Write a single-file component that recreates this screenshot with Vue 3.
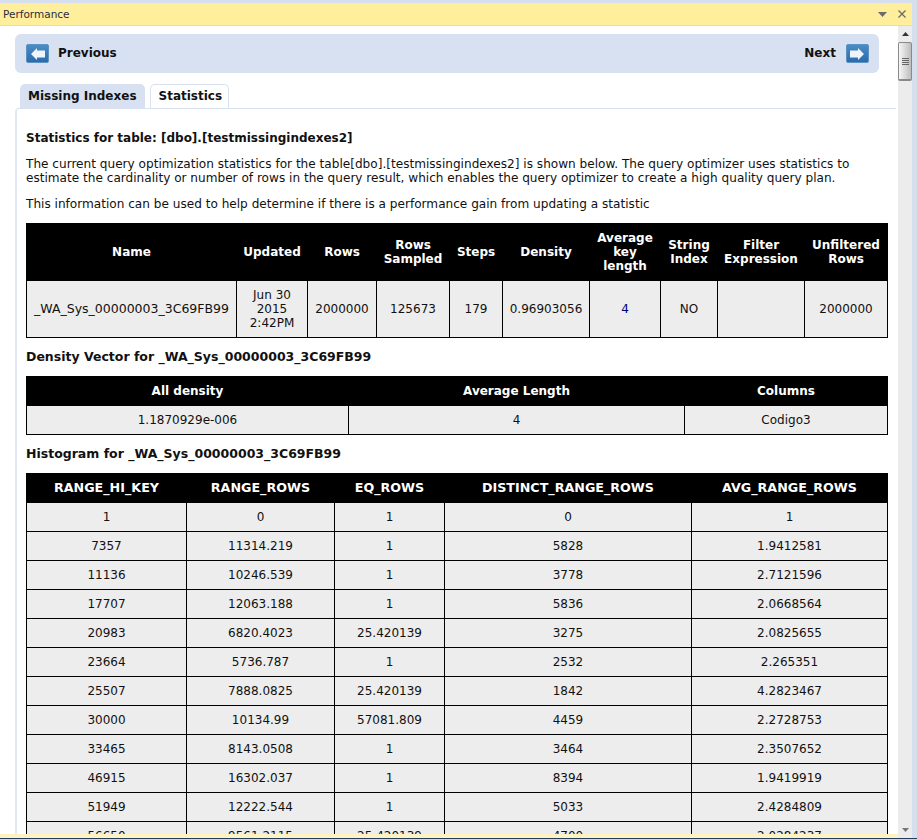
<script setup>
const hist = [
  ['1','0','1','0','1'],
  ['7357','11314.219','1','5828','1.9412581'],
  ['11136','10246.539','1','3778','2.7121596'],
  ['17707','12063.188','1','5836','2.0668564'],
  ['20983','6820.4023','25.420139','3275','2.0825655'],
  ['23664','5736.787','1','2532','2.265351'],
  ['25507','7888.0825','25.420139','1842','4.2823467'],
  ['30000','10134.99','57081.809','4459','2.2728753'],
  ['33465','8143.0508','1','3464','2.3507652'],
  ['46915','16302.037','1','8394','1.9419919'],
  ['51949','12222.544','1','5033','2.4284809'],
  ['56650','9561.2115','25.420139','4700','2.0284237'],
]
const histHead = ['RANGE_HI_KEY','RANGE_ROWS','EQ_ROWS','DISTINCT_RANGE_ROWS','AVG_RANGE_ROWS']
const statHead = ['Name','Updated','Rows','Rows Sampled','Steps','Density','Average key length','String Index','Filter Expression','Unfiltered Rows']
const statRow = ['_WA_Sys_00000003_3C69FB99','Jun 30 2015 2:42PM','2000000','125673','179','0.96903056','4','NO','','2000000']
const statCols = [210,71,69,73,53,87,71,57,87,83]
const densCols = [322,336,203]
const histCols = [160,148,110,247,196]
</script>

<template>
  <div class="window">
    <div class="titlebar">
      <span class="title">Performance</span>
      <span class="controls">
        <svg width="9" height="5" viewBox="0 0 9 5"><path d="M0 0h9L4.5 5z" fill="#6b6b6b"/></svg>
        <svg width="8" height="8" viewBox="0 0 8 8"><path d="M.5.5l7 7M7.5.5l-7 7" stroke="#6b6b6b" stroke-width="1.3" fill="none"/></svg>
      </span>
    </div>
    <div class="body">
      <div class="main">
        <div class="content">
          <div class="nav">
            <div class="nav-item">
              <svg class="arrow" width="23" height="19" viewBox="0 0 23 19">
                <defs>
                  <linearGradient id="ag" x1="0" y1="0" x2="0" y2="1">
                    <stop offset="0" stop-color="#4a8ec8"/><stop offset="1" stop-color="#2a6aa8"/>
                  </linearGradient>
                </defs>
                <rect x="0.5" y="0.5" width="22" height="18" rx="1.5" fill="url(#ag)" stroke="#5b93c4"/>
                <path d="M5 10L11 4V6.5H19V13.5H11V16z" fill="#eef5fb"/>
              </svg>
              <span>Previous</span>
            </div>
            <div class="nav-item next">
              <span>Next</span>
              <svg class="arrow" width="23" height="19" viewBox="0 0 23 19">
                <rect x="0.5" y="0.5" width="22" height="18" rx="1.5" fill="url(#ag)" stroke="#5b93c4"/>
                <path d="M18 10L12 4V6.5H4V13.5H12V16z" fill="#eef5fb"/>
              </svg>
            </div>
          </div>
          <div class="tabs">
            <div class="tab">Missing Indexes</div>
            <div class="tab active">Statistics</div>
          </div>
          <div class="panel">
            <h3 class="first">Statistics for table: [dbo].[testmissingindexes2]</h3>
            <p>The current query optimization statistics for the table[dbo].[testmissingindexes2] is shown below. The query optimizer uses statistics to estimate the cardinality or number of rows in the query result, which enables the query optimizer to create a high quality query plan.</p>
            <p class="p2">This information can be used to help determine if there is a performance gain from updating a statistic</p>

            <table class="stat">
              <colgroup><col v-for="(w, i) in statCols" :key="i" :style="{ width: w + 'px' }" /></colgroup>
              <thead><tr><th v-for="h in statHead" :key="h">{{ h }}</th></tr></thead>
              <tbody><tr><td v-for="(c, i) in statRow" :key="i" :class="{ link: i === 6, name: i === 0 }">{{ c }}</td></tr></tbody>
            </table>

            <h3 class="h-dens">Density Vector for _WA_Sys_00000003_3C69FB99</h3>
            <table class="dens">
              <colgroup><col v-for="(w, i) in densCols" :key="i" :style="{ width: w + 'px' }" /></colgroup>
              <thead><tr><th>All density</th><th>Average Length</th><th>Columns</th></tr></thead>
              <tbody><tr><td>1.1870929e-006</td><td>4</td><td>Codigo3</td></tr></tbody>
            </table>

            <h3 class="h-hist">Histogram for _WA_Sys_00000003_3C69FB99</h3>
            <table class="hist">
              <colgroup><col v-for="(w, i) in histCols" :key="i" :style="{ width: w + 'px' }" /></colgroup>
              <thead><tr><th v-for="h in histHead" :key="h">{{ h }}</th></tr></thead>
              <tbody>
                <tr v-for="r in hist" :key="r[0]"><td v-for="(c, i) in r" :key="i">{{ c }}</td></tr>
              </tbody>
            </table>
          </div>
        </div>
        <div class="foot"></div>
      </div>
      <div class="scrollbar">
        <div class="sb-btn"><svg width="7" height="4" viewBox="0 0 7 4"><path d="M0 4h7L3.5 0z" fill="#333"/></svg></div>
        <div class="thumb"><i></i><i></i><i></i><i></i></div>
        <div class="track"></div>
        <div class="sb-btn"><svg width="7" height="4" viewBox="0 0 7 4"><path d="M0 0h7L3.5 4z" fill="#777"/></svg></div>
      </div>
    </div>
    <div class="edge"></div>
  </div>
</template>

<style>
html, body { margin: 0; padding: 0; background: #d6dfee; }
</style>

<style scoped>
.window {
  width: 917px;
  height: 839px;
  box-sizing: border-box;
  padding-top: 3px;
  background: #d6dfee;
  display: flex;
  flex-direction: column;
  overflow: hidden;
  font-family: "DejaVu Sans", Verdana, sans-serif;
  font-size: 12px;
  color: #111;
}
.titlebar {
  height: 23px;
  flex: none;
  box-sizing: border-box;
  background: #ffef9c;
  border-bottom: 1px solid #d4dbe6;
  margin-right: 5px;
  display: flex;
  align-items: center;
  justify-content: space-between;
  padding: 0 6px 0 3px;
}
.title { font-size: 10.5px; color: #2b2b40; }
.controls { display: flex; align-items: center; gap: 11px; }
.body {
  flex: 1;
  min-height: 0;
  display: flex;
  margin-right: 5px;
  background: #fff;
}
.main {
  flex: 1;
  min-width: 0;
  display: flex;
  flex-direction: column;
}
.content {
  flex: 1;
  min-height: 0;
  overflow: hidden;
  padding: 8px 2px 0 15px;
}
.nav {
  height: 39px;
  width: 864px;
  box-sizing: border-box;
  background: #d8e1f1;
  border-radius: 6px;
  display: flex;
  justify-content: space-between;
  align-items: center;
  padding: 0 10px 0 11px;
  font-weight: bold;
}
.nav-item { display: flex; align-items: center; gap: 9px; }
.nav-item.next { gap: 10px; }
.nav-item span { position: relative; top: -1px; }
.tabs { display: flex; gap: 5px; margin: 11px 0 0 5px; height: 24px; }
.tab {
  box-sizing: border-box;
  height: 24px;
  padding: 0 8px;
  line-height: 24px;
  font-weight: bold;
  background: #d8e1f1;
  border-radius: 5px 5px 0 0;
}
.tab.active {
  background: #fff;
  border: 1px solid #d8e1f1;
  border-bottom: 0;
  line-height: 22px;
  padding: 0 6px 0 8px;
}
.panel {
  box-sizing: border-box;
  border-top: 1px solid #d8e1f1;
  border-left: 2px solid #e3e9f4;
  border-top-left-radius: 4px;
  padding: 0 8px 0 9px;
}
h3 { margin: 0; font-size: 12.5px; font-weight: bold; line-height: 16px; }
h3.first { margin-top: 21px; font-size: 12px; }
p { margin: 11px 0 0; line-height: 14px; font-size: 12.1px; }
p.p2 { margin-top: 12px; }
table {
  border-collapse: collapse;
  table-layout: fixed;
  width: 861px;
  text-align: center;
}
th {
  background: #000;
  color: #fff;
  font-weight: bold;
  border: 1px solid #000;
  padding: 0 2px;
  line-height: 14px;
}
td {
  background: #ededed;
  border: 1px solid #000;
  padding: 0 2px;
  line-height: 14px;
}
td.link { color: #00007a; }
td.name { font-size: 12.5px; padding: 0; }
.stat { margin-top: 12px; }
.stat th { height: 56px; }
.stat td { height: 56px; }
.h-dens { margin-top: 11px; }
.dens { margin-top: 11px; }
.dens th { height: 29px; padding-bottom: 1px; box-sizing: border-box; }
.dens td { height: 28px; }
.h-hist { margin-top: 11px; }
.hist { margin-top: 11px; }
.hist th { height: 28px; font-size: 12.7px; padding: 0; }
.hist td { height: 28px; }
.scrollbar {
  width: 14px;
  flex: none;
  background: #ececec;
  display: flex;
  flex-direction: column;
  align-items: center;
}
.sb-btn { height: 16px; width: 100%; display: flex; align-items: center; justify-content: center; }
.thumb {
  box-sizing: border-box;
  width: 14px;
  height: 39px;
  border: 1px solid #8a8a8a;
  border-bottom-width: 2px;
  border-radius: 2px;
  background: linear-gradient(90deg, #f6f6f6, #bdbdbd);
  display: flex;
  flex-direction: column;
  justify-content: center;
  align-items: center;
  gap: 1px;
}
.thumb i { display: block; width: 7px; height: 1px; background: #666; }
.track { flex: 1; }
.foot {
  height: 4px;
  flex: none;
  background: #fff3c4;
}
.edge {
  height: 1px;
  flex: none;
  background: #1f3d5c;
}
</style>
